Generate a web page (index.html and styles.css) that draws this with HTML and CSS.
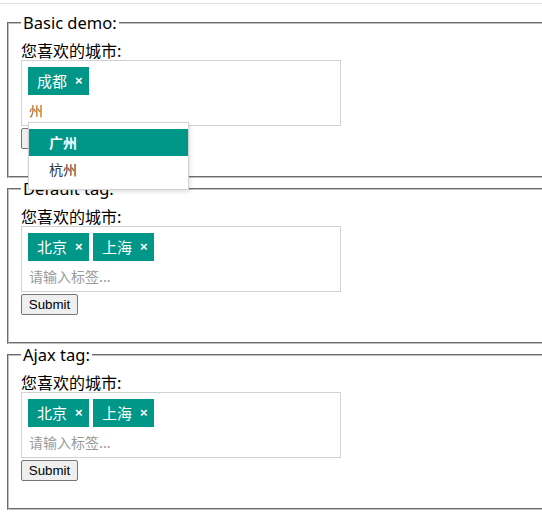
FILE: index.html
```html
<!DOCTYPE html>
<html>
<head>
<meta charset="utf-8">
<link rel="stylesheet" href="styles.css">
</head>
<body>
<div class="topline"></div>

<fieldset class="demo">
  <legend>Basic demo:</legend>
  <div class="label">您喜欢的城市:</div>
  <div class="tagbox">
    <div class="tags">
      <span class="tag">成都<span class="close">×</span></span>
    </div>
    <div class="input typed">州</div>
    <ul class="dropdown">
      <li class="item active">广州</li>
      <li class="item">杭州</li>
    </ul>
  </div>
  <button class="submit">Submit</button>
</fieldset>

<fieldset class="demo">
  <legend>Default tag:</legend>
  <div class="label">您喜欢的城市:</div>
  <div class="tagbox">
    <div class="tags">
      <span class="tag">北京<span class="close">×</span></span>
      <span class="tag">上海<span class="close">×</span></span>
    </div>
    <div class="input placeholder">请输入标签...</div>
  </div>
  <button class="submit">Submit</button>
</fieldset>

<fieldset class="demo">
  <legend>Ajax tag:</legend>
  <div class="label">您喜欢的城市:</div>
  <div class="tagbox">
    <div class="tags">
      <span class="tag">北京<span class="close">×</span></span>
      <span class="tag">上海<span class="close">×</span></span>
    </div>
    <div class="input placeholder">请输入标签...</div>
  </div>
  <button class="submit">Submit</button>
</fieldset>
</body>
</html>
```

FILE: styles.css
```css
html, body {
  margin: 0;
  padding: 0;
  overflow: hidden;
  background: #fff;
}

body {
  font-family: "Noto Sans", "Noto Sans CJK SC", sans-serif;
  color: #000;
}

.topline {
  height: 3px;
  border-bottom: 1px solid #dddddd;
  margin-bottom: 8px;
}

.demo {
  margin: 0 0 0 7px;
  width: 600px;
  border: 2px groove #c0c0c0;
  padding: 5.6px 12px 27.5px 12px;
}

.demo legend {
  padding: 0 2px;
  font-size: 16.5px;
  line-height: 22px;
}

.label {
  font-size: 16px;
  line-height: 20px;
  font-family: "Noto Sans CJK SC", sans-serif;
}

.tagbox {
  position: relative;
  box-sizing: border-box;
  width: 320px;
  border: 1px solid #d2d2d2;
  padding: 6px 6px 0 6px;
}

.tags {
  display: flex;
  gap: 4px;
  height: 28px;
}

.tag {
  display: inline-flex;
  align-items: center;
  box-sizing: border-box;
  width: 61px;
  height: 28px;
  background: #009688;
  color: #fff;
  font-family: "Noto Sans CJK SC", sans-serif;
  font-size: 15px;
  padding: 0 0 0 9px;
}

.close {
  font-family: "Liberation Sans", sans-serif;
  font-weight: bold;
  font-size: 13px;
  margin-left: 8px;
}

.input {
  height: 30px;
  line-height: 30px;
  padding-left: 1px;
  font-family: "Noto Sans CJK SC", sans-serif;
  font-size: 14px;
}

.typed {
  color: #8f6430;
}

.placeholder {
  color: #9a9a9a;
}

.dropdown {
  position: absolute;
  left: 6px;
  top: 61px;
  width: 161px;
  box-sizing: border-box;
  margin: 0;
  padding: 6px 0;
  list-style: none;
  background: #fff;
  border: 1px solid #d2d2d2;
  box-shadow: 1px 2px 4px rgba(0, 0, 0, 0.12);
  z-index: 10;
}

.item {
  height: 27px;
  line-height: 27px;
  padding-left: 20px;
  font-family: "Noto Sans CJK SC", sans-serif;
  font-size: 14px;
  color: #333;
}

.item.active {
  background: #009688;
  color: #fff;
  font-weight: bold;
}

.submit {
  display: block;
  margin-top: 2px;
  font-family: "Liberation Sans", Arial, sans-serif;
  font-size: 13.333px;
  height: 21px;
  width: 57px;
  padding: 1px 0;
  color: #000;
  background: #efefef;
  border: 1px solid #767676;
  border-radius: 2px;
}
```
